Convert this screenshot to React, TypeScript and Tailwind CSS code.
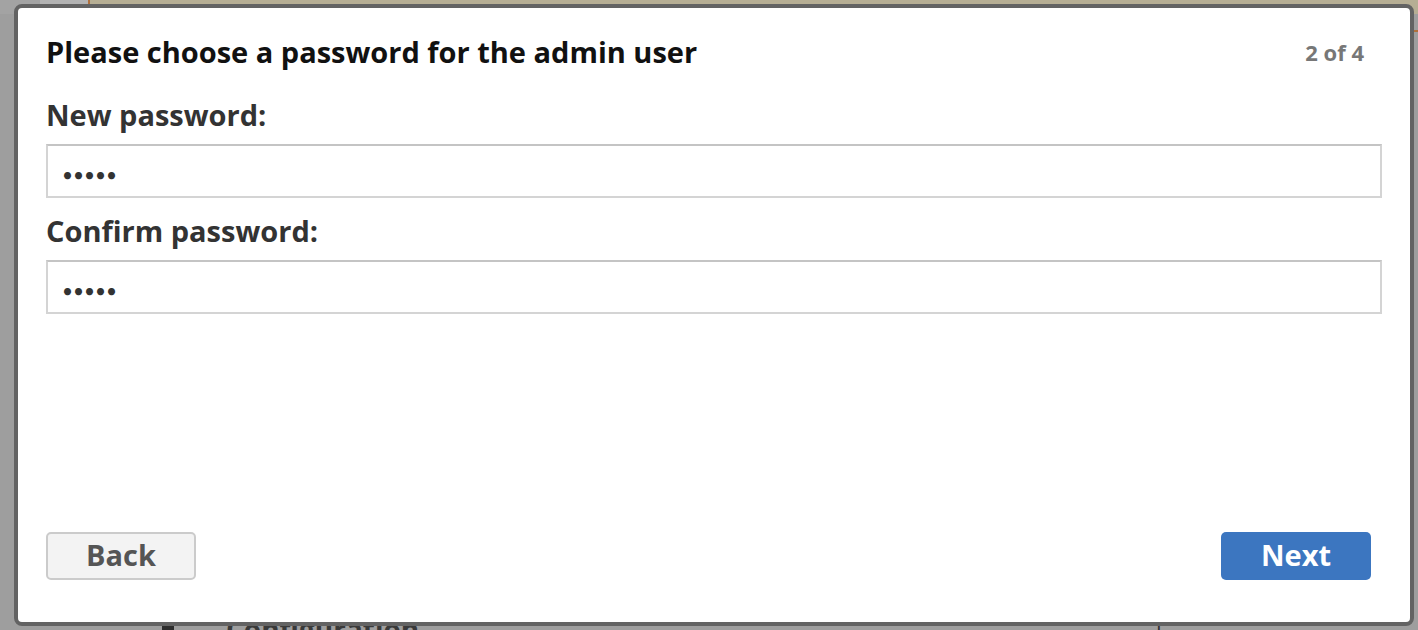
import React from 'react'

function PasswordField({ label, value }: { label: string; value: string }) {
  return (
    <div className="flex flex-col">
      <label className="text-[29px] leading-[34px] font-bold text-[#333]">{label}</label>
      <div className="mt-[12px] h-[54px] border-2 border-[#d4d4d4] border-t-[#c4c4c4] bg-white flex items-center px-[14px] pt-[6px]">
        <span className="font-['Lato'] text-[19px] text-[#333] leading-none">{value}</span>
      </div>
    </div>
  )
}

export default function App() {
  return (
    <div
      className="relative w-[1418px] h-[630px] overflow-hidden bg-[#9e9e9e]"
      style={{ fontFamily: '"Open Sans", Lato, sans-serif' }}
    >
      {/* page behind the dimmed overlay */}
      <div className="flex h-[14px]">
        <div className="w-[40px] bg-[#a3a3a3]" />
        <div className="w-[48px] bg-[#b3b3b3]" />
        <div className="w-[2px] bg-[#b0703c]" />
        <div className="flex-1 bg-[#b6ae94]" />
      </div>
      <div className="absolute right-0 top-[30px] w-[6px] h-[2px] bg-[#b0703c]" />
      <div className="absolute left-[226px] top-[612px] text-[28px] leading-[34px] font-bold text-[#3a3a3a]">Configuration</div>
      <div className="absolute left-[162px] top-[612px] w-[12px] h-[20px] bg-[#2e2e2e]" />
      <div className="absolute left-[1152px] top-[612px] text-[22px] leading-[30px] text-[#333]">1</div>

      {/* modal */}
      <div className="absolute left-[14px] top-[4px] w-[1400px] h-[622px] rounded-[8px] border-4 border-[#636363] bg-white flex flex-col px-[28px]">
        <div className="flex items-start justify-between pt-[26px] pr-[18px]">
          <h1 className="text-[29px] leading-[36px] font-bold text-[#111]">
            Please choose a password for the admin user
          </h1>
          <span className="text-[22px] leading-[36px] font-bold text-[#777]">2 of 4</span>
        </div>
        <div className="mt-[28px] flex flex-col gap-[16px]">
          <PasswordField label="New password:" value="•••••" />
          <PasswordField label="Confirm password:" value="•••••" />
        </div>
        <div className="mt-auto mb-[42px] flex justify-between pr-[11px]">
          <button className="w-[150px] h-[48px] rounded-[5px] border-2 border-[#cbcbcb] bg-[#f3f3f3] text-[29px] leading-none font-bold text-[#555] pb-[3px]">
            Back
          </button>
          <button className="w-[150px] h-[48px] rounded-[5px] bg-[#3c76c0] text-[29px] leading-none font-bold text-white pb-[3px]">
            Next
          </button>
        </div>
      </div>
    </div>
  )
}
